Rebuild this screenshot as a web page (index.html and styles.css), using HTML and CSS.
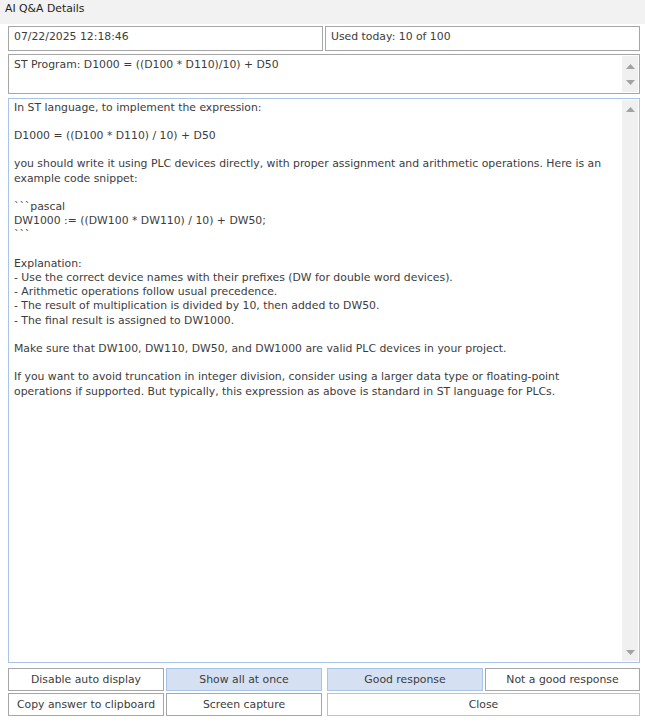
FILE: index.html
```html
<!DOCTYPE html>
<html>
<head>
<meta charset="utf-8">
<title>AI Q&amp;A Details</title>
<link rel="stylesheet" href="styles.css">
</head>
<body>
<div class="titlebar">AI Q&amp;A Details</div>
<div class="content">
  <div class="info-row">
    <div class="field">07/22/2025 12:18:46</div>
    <div class="field">Used today: 10 of 100</div>
  </div>
  <div class="memo question">
    <div class="memo-text">ST Program: D1000 = ((D100 * D110)/10) + D50</div>
    <div class="scrollbar">
      <svg class="arrow" width="9" height="5" viewBox="0 0 9 5"><path d="M0 5 L4.5 0 L9 5 Z" fill="#a3a3a3"/></svg>
      <svg class="arrow" width="9" height="5" viewBox="0 0 9 5"><path d="M0 0 L9 0 L4.5 5 Z" fill="#a3a3a3"/></svg>
    </div>
  </div>
  <div class="memo answer">
    <div class="memo-text answer-text">In ST language, to implement the expression:

D1000 = ((D100 * D110) / 10) + D50

you should write it using PLC devices directly, with proper assignment and arithmetic operations. Here is an
example code snippet:

&#96;&#96;&#96;pascal
DW1000 := ((DW100 * DW110) / 10) + DW50;
&#96;&#96;&#96;

Explanation:
- Use the correct device names with their prefixes (DW for double word devices).
- Arithmetic operations follow usual precedence.
- The result of multiplication is divided by 10, then added to DW50.
- The final result is assigned to DW1000.

Make sure that DW100, DW110, DW50, and DW1000 are valid PLC devices in your project.

If you want to avoid truncation in integer division, consider using a larger data type or floating-point
operations if supported. But typically, this expression as above is standard in ST language for PLCs.</div>
    <div class="scrollbar">
      <svg class="arrow" width="9" height="5" viewBox="0 0 9 5"><path d="M0 5 L4.5 0 L9 5 Z" fill="#a3a3a3"/></svg>
      <svg class="arrow" width="9" height="5" viewBox="0 0 9 5"><path d="M0 0 L9 0 L4.5 5 Z" fill="#a3a3a3"/></svg>
    </div>
  </div>
  <div class="buttons">
    <div class="btn-row">
      <div class="pair">
        <button class="btn">Disable auto display</button>
        <button class="btn active">Show all at once</button>
      </div>
      <div class="pair">
        <button class="btn active">Good response</button>
        <button class="btn">Not a good response</button>
      </div>
    </div>
    <div class="btn-row">
      <div class="pair">
        <button class="btn">Copy answer to clipboard</button>
        <button class="btn">Screen capture</button>
      </div>
      <div class="pair single">
        <button class="btn focus">Close</button>
      </div>
    </div>
  </div>
</div>
</body>
</html>
```
FILE: styles.css
```css
html, body {
  margin: 0;
  padding: 0;
  background: #ffffff;
}
body {
  width: 645px;
  height: 725px;
  font-family: "DejaVu Sans", sans-serif;
  font-size: 10.85px;
  color: #3c3c3c;
  overflow: hidden;
}
.titlebar {
  height: 24px;
  box-sizing: border-box;
  background: #f2f2f2;
  padding: 1px 0 0 5px;
  line-height: 16px;
  color: #1e1e1e;
}
.content {
  padding: 2px 5px 0 8px;
  display: flex;
  flex-direction: column;
}
.info-row {
  display: grid;
  grid-template-columns: 315px 315px;
  column-gap: 2px;
  height: 25px;
}
.field {
  border: 1px solid #a6a6a6;
  box-sizing: border-box;
  padding: 1px 0 0 5px;
  line-height: 17px;
  background: #fff;
}
.memo {
  display: flex;
  box-sizing: border-box;
  border: 1px solid #a6a6a6;
  background: #fff;
}
.question {
  margin-top: 3px;
  height: 40px;
}
.answer {
  margin-top: 4px;
  height: 565px;
  border-color: #a9c4e9;
}
.memo-text {
  flex: 1;
  padding: 2px 0 0 5px;
  line-height: 15px;
  white-space: pre;
  overflow: hidden;
}
.answer-text {
  padding-top: 1.5px;
  line-height: 14.2px;
}
.scrollbar {
  width: 16px;
  margin: 1px 1px 1px 0;
  background: #f0f0f0;
  display: flex;
  flex-direction: column;
  justify-content: space-between;
  align-items: center;
  padding: 7px 0 6px;
}
.question .scrollbar { padding: 8px 0 7px; }
.arrow { display: block; }
.buttons {
  margin-top: 5px;
  display: flex;
  flex-direction: column;
  row-gap: 2px;
}
.btn-row {
  display: grid;
  grid-template-columns: 314px 313px;
  column-gap: 5px;
  height: 23px;
}
.pair {
  display: grid;
  grid-template-columns: 156px 156px;
  column-gap: 2px;
}
.btn-row .pair + .pair { grid-template-columns: 156px 155px; }
.btn-row .pair.single { grid-template-columns: 313px; }
.btn {
  font: inherit;
  color: #3c3c3c;
  background: #fff;
  border: 1px solid #a6a6a6;
  margin: 0;
  padding: 0;
  height: 23px;
  line-height: 20px;
  text-align: center;
}
.btn.active {
  background: #d5e1f3;
  border-color: #a9c4e9;
}
.btn.focus {
  border-color: #a9c4e9;
}
```
